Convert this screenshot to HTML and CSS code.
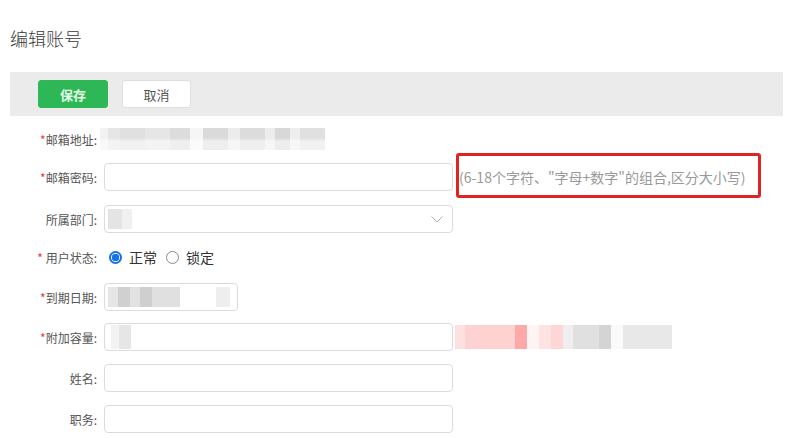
FILE: index.html
```html
<!DOCTYPE html>
<html lang="zh-CN">
<head>
<meta charset="utf-8">
<title>编辑账号</title>
<link rel="stylesheet" href="styles.css">
</head>
<body>
<div class="page">
  <h1 class="title">编辑账号</h1>
  <div class="toolbar">
    <button class="btn btn-save">保存</button>
    <button class="btn btn-cancel">取消</button>
  </div>
  <form class="form">
    <div class="row row-text">
      <label class="label"><span class="req">*</span>邮箱地址:</label>
      <span class="blur blur-email"></span>
    </div>
    <div class="row">
      <label class="label"><span class="req">*</span>邮箱密码:</label>
      <input class="input" type="text">
      <span class="hint">(6-18个字符、"字母+数字"的组合,区分大小写)</span>
    </div>
    <div class="row row-select">
      <label class="label">所属部门:</label>
      <div class="input select">
        <span class="blur blur-dept"></span>
        <svg class="chevron" width="12" height="7" viewBox="0 0 12 7"><path d="M0.5 0.5 L6 6 L11.5 0.5" fill="none" stroke="#b0b0b0" stroke-width="1"/></svg>
      </div>
    </div>
    <div class="row">
      <label class="label"><span class="req">*</span> 用户状态:</label>
      <div class="radios">
        <span class="radio checked"></span><span class="radio-text">正常</span>
        <span class="radio"></span><span class="radio-text">锁定</span>
      </div>
    </div>
    <div class="row">
      <label class="label"><span class="req">*</span>到期日期:</label>
      <div class="input input-date"><span class="blur blur-date"></span></div>
    </div>
    <div class="row">
      <label class="label"><span class="req">*</span>附加容量:</label>
      <div class="input"><span class="blur blur-cap-in"></span></div>
      <span class="blur blur-cap-out"></span>
    </div>
    <div class="row row-wide">
      <label class="label">姓名:</label>
      <input class="input" type="text">
    </div>
    <div class="row row-wide">
      <label class="label">职务:</label>
      <input class="input" type="text">
    </div>
  </form>
</div>
</body>
</html>
```

FILE: styles.css
```css
* { box-sizing: border-box; }
html, body { margin: 0; padding: 0; background: #fff; }
body {
  font-family: "Noto Sans CJK SC", "Microsoft YaHei", "Noto Sans", sans-serif;
  color: #333;
}
.page { width: 801px; height: 438px; overflow: hidden; }
.title {
  margin: 0;
  padding: 26px 0 22px 10px;
  font-size: 18px;
  line-height: 24px;
  font-weight: 300;
  color: #3a3a3a;
}
.toolbar {
  margin-left: 10px;
  width: 773px;
  height: 44px;
  background: #ebebeb;
  display: flex;
  align-items: center;
  gap: 14px;
  padding-left: 28px;
}
.btn {
  height: 28px;
  border-radius: 3px;
  font-family: inherit;
  font-size: 13px;
  padding: 0;
  cursor: pointer;
}
.btn-save {
  width: 70px;
  background: #2db757;
  border: 1px solid #2db757;
  color: #e3fbe6;
  font-weight: 700;
}
.btn-cancel {
  width: 69px;
  background: #fff;
  border: 1px solid #dedede;
  color: #555;
}
.form {
  margin: 0;
  padding-top: 11px;
  display: flex;
  flex-direction: column;
  gap: 12px;
}
.row {
  display: flex;
  align-items: center;
  height: 28px;
}
.row-text { height: 24px; }
.row-select { margin-top: 2px; margin-bottom: -2px; }
.row-wide { margin-top: 1px; }
.label {
  width: 97px;
  text-align: right;
  font-size: 12px;
  color: #555;
  margin-right: 7px;
  white-space: pre;
  flex: none;
}
.req { color: #e53935; }
.input {
  width: 349px;
  height: 28px;
  border: 1px solid #dcdcdc;
  border-radius: 4px;
  background: #fff;
  font-family: inherit;
  font-size: 13px;
  padding: 0 6px;
  flex: none;
  outline: none;
  display: flex;
  align-items: center;
}
.select { justify-content: space-between; padding: 0 9px 0 3px; }
.chevron { display: block; }
.input-date { width: 134px; padding: 0 3px; }
.hint {
  position: relative;
  margin-left: 6px;
  font-size: 14px;
  line-height: 20px;
  color: #999;
  white-space: nowrap;
}
.hint::after {
  content: "";
  position: absolute;
  left: -3px;
  right: -15px;
  top: -14px;
  bottom: -11px;
  border: 3px solid #e02424;
  border-radius: 3px;
}
.radios { display: flex; align-items: center; font-size: 14px; color: #333; padding-left: 5px; }
.radio {
  width: 13px;
  height: 13px;
  border: 1px solid #8a8a8a;
  border-radius: 50%;
  background: #fff;
  flex: none;
}
.radio.checked {
  border: 2px solid #1572e8;
  background: radial-gradient(circle, #1572e8 0 3.5px, #fff 4px);
}
.radio-text { margin-left: 7px; margin-right: 9px; }
.blur { display: block; flex: none; }
.blur-email {
  width: 225px;
  height: 22px;
  margin-left: -4px;
  background:
    linear-gradient(180deg, rgba(255,255,255,0) 0 45%, rgba(255,255,255,0.55) 60% 100%),
    linear-gradient(90deg, #f2f2f2 0 8px, #e6e6e6 8px 20px, #e0e0e0 20px 45px, #e6e6e6 45px 70px, #dcdcdc 70px 90px, #f6f6f6 90px 103px, #dadada 103px 128px, #ececec 128px 140px, #dcdcdc 140px 165px, #ececec 165px 175px, #d8d8d8 175px 190px, #eeeeee 190px 200px, #e0e0e0 200px 225px);
}
.blur-dept {
  width: 24px;
  height: 20px;
  background: linear-gradient(90deg, #e4e4e4 0 14px, #f0f0f0 14px 24px);
}
.blur-date {
  width: 125px;
  height: 20px;
  background: linear-gradient(90deg, #e6e6e6 0 10px, #d0d0d0 10px 22px, #e2e2e2 22px 32px, #cfcfcf 32px 44px, #e0e0e0 44px 72px, #fff 72px 108px, #eeeeee 108px 122px, #fff 122px);
}
.blur-cap-in {
  width: 20px;
  height: 24px;
  background: linear-gradient(90deg, #f2f2f2 0 8px, #e6e6e6 8px 20px);
}
.blur-cap-out {
  width: 217px;
  height: 24px;
  margin-left: 2px;
  background: linear-gradient(90deg, #ffe0e0 0 10px, #ffd2d2 10px 60px, #ffa8a8 60px 72px, #fff4f4 72px 84px, #ffe2e2 84px 96px, #ffd6d6 96px 108px, #eeeeee 108px 118px, #e0e0e0 118px 144px, #d4d4d4 144px 156px, #fafafa 156px 168px, #e8e8e8 168px 217px);
}
```
